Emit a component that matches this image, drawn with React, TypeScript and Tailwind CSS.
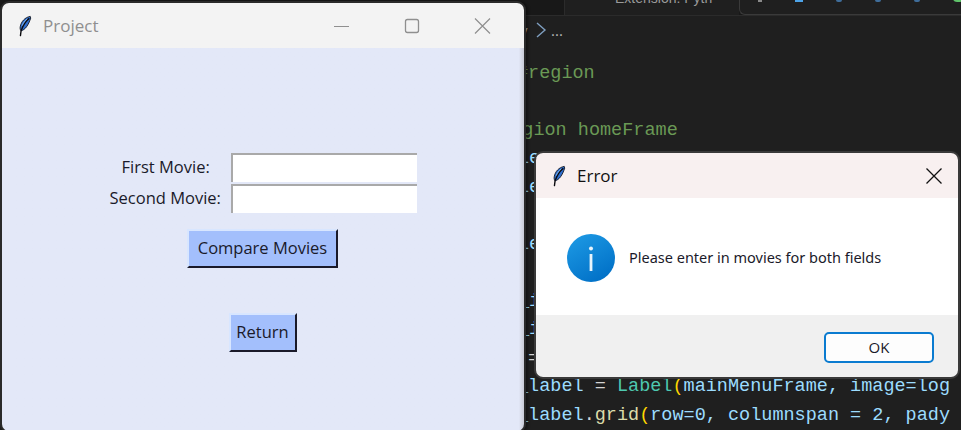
function Feather({ className }: { className?: string }) {
  return (
    <svg className={className} viewBox="0 0 16 24" fill="none">
      <path d="M14 1C8 2 3.500 7 2.500 13C2.200 15 2.600 16.500 3.500 17.500C8 16.500 12 11 14.500 3Z" fill="#2f6fd0" stroke="#10151f" strokeWidth="1" />
      <path d="M12.500 3.500C9 6 6 10.500 3.500 17.500L2.800 23" stroke="#0b0b0f" strokeWidth="1.600" strokeLinecap="round" />
      <path d="M10.500 4C8 6 6 8.500 4.800 11.500" stroke="#8fc0f5" strokeWidth="1" />
    </svg>
  );
}

const codeLines: { text: React.ReactNode; pad: string }[] = [
  { pad: "pl-[517px]", text: <span className="text-[#6a9955]">#region</span> },
  { pad: "", text: "" },
  { pad: "pl-[489px]", text: <span className="text-[#6a9955]">#region homeFrame</span> },
  { pad: "pl-[518px]", text: <span className="text-[#9cdcfe]">le</span> },
  { pad: "pl-[518px]", text: <span className="text-[#9cdcfe]">le</span> },
  { pad: "", text: "" },
  { pad: "pl-[518px]", text: <span className="text-[#9cdcfe]">le</span> },
  { pad: "", text: "" },
  { pad: "pl-[518px]", text: <span className="text-[#9cdcfe]">_i</span> },
  { pad: "pl-[518px]", text: <span className="text-[#9cdcfe]">_i</span> },
  {
    pad: "pl-[528px]",
    text: (
      <>
        <span className="text-[#d4d4d4]">= </span>
        <span className="text-[#4ec9b0]">ImageTk.PhotoImage</span>
        <span className="text-[#ffd700]">(</span>
        <span className="text-[#9cdcfe]">logo_image</span>
        <span className="text-[#ffd700]">)</span>
      </>
    ),
  },
  {
    pad: "pl-[517px]",
    text: (
      <>
        <span className="text-[#9cdcfe]">_label</span>
        <span className="text-[#d4d4d4]"> = </span>
        <span className="text-[#4ec9b0]">Label</span>
        <span className="text-[#ffd700]">(</span>
        <span className="text-[#9cdcfe]">mainMenuFrame, image=log</span>
      </>
    ),
  },
  {
    pad: "pl-[517px]",
    text: (
      <>
        <span className="text-[#9cdcfe]">_label</span>
        <span className="text-[#d4d4d4]">.</span>
        <span className="text-[#dcdcaa]">grid</span>
        <span className="text-[#ffd700]">(</span>
        <span className="text-[#9cdcfe]">row=0, columnspan = 2, pady</span>
      </>
    ),
  },
];

function EditorBackground() {
  return (
    <div className="h-full flex flex-col bg-[#1f1f1f] font-['Liberation_Mono',monospace]">
      <div className="h-[20px] flex bg-[#181818] border-b border-[#2b2b2b] overflow-hidden">
        <div className="w-[565px] shrink-0 border-r border-[#2b2b2b]" />
        <div className="w-[174px] shrink-0 bg-[#1f1f1f] pl-[50px] -mt-[12px] text-[14px] text-[#9a9a9a] font-['Liberation_Sans',sans-serif] whitespace-nowrap overflow-hidden">
          Extension: Pyth
        </div>
        <div className="flex-1 bg-[#1f1f1f] border-l border-b border-[#3a3a3a] rounded-bl-md flex gap-[33px] pl-[18px] -mt-[2px]">
          <span className="w-[4px] h-[4px] bg-[#8a8a8a]" />
          <span className="w-[8px] h-[4px] bg-[#4da3e8]" />
          <span className="w-[6px] h-[4px] rounded-full bg-[#3f6d9a]" />
          <span className="w-[6px] h-[4px] rounded-full bg-[#3f6d9a]" />
          <span className="w-[6px] h-[4px] rounded-full bg-[#3f6d9a]" />
          <span className="w-[10px] h-[4px] rounded-b-full bg-[#5fc36a]" />
        </div>
      </div>
      <div className="h-[34px] flex items-center pl-[520px] text-[#b8b8b8] font-['Open_Sans',sans-serif] text-[15px] gap-[1px]">
        <span className="w-[12px] overflow-hidden">y</span>
        <svg className="w-[12px] h-[18px] ml-[2px]" viewBox="0 0 12 18" fill="none">
          <path d="M2 2L10 9L2 16" stroke="#7f9fc0" strokeWidth="1.400" />
        </svg>
        <span className="ml-[3px]">...</span>
      </div>
      <div className="h-[20px]" />
      {codeLines.map((line, i) => (
        <div key={i} className={`h-[28.500px] shrink-0 leading-[28.500px] text-[18.500px] whitespace-pre ${line.pad}`}>
          {line.text}
        </div>
      ))}
    </div>
  );
}

function MovieWindow() {
  return (
    <div className="absolute left-0 top-[1px] w-[526px] h-[432px] rounded-[9px] border-2 border-[#2a2a2a] overflow-hidden flex flex-col shadow-[2px_0_3px_rgba(0,0,0,0.4)]">
      <div className="h-[45px] shrink-0 bg-[#f3f3f3] flex items-center font-['Open_Sans',sans-serif]">
        <Feather className="w-[14px] h-[24px] ml-[16px]" />
        <span className="ml-[11px] text-[17px] text-[#8f8f8f]">Project</span>
        <div className="ml-auto flex items-center">
          <svg className="w-[70px] h-[20px]" viewBox="0 0 70 20" fill="none">
            <path d="M20 10.500H35" stroke="#8f8f8f" strokeWidth="1" />
          </svg>
          <svg className="w-[70px] h-[20px]" viewBox="0 0 70 20" fill="none">
            <rect x="21.500" y="3.500" width="13" height="13" rx="2" stroke="#8f8f8f" strokeWidth="1.300" />
          </svg>
          <svg className="w-[70px] h-[20px]" viewBox="0 0 70 20" fill="none">
            <path d="M21 2.500L36 17.500M36 2.500L21 17.500" stroke="#8f8f8f" strokeWidth="1.200" />
          </svg>
        </div>
      </div>
      <div className="flex-1 bg-gradient-to-r from-[#e3e8f8] from-[99%] to-[#c9cbd6] flex flex-col items-center text-[#1a1a2a] font-['Open_Sans',sans-serif] text-[16.500px]">
        <div className="mt-[105px] ml-[-1px] grid grid-cols-[122px_186px] gap-y-[2px]">
          <div className="h-[29px] flex items-center pl-[13px]">First Movie:</div>
          <div className="h-[29px] bg-white border-t-2 border-l-2 border-[#a9a9a9]" />
          <div className="h-[29px] flex items-center pl-[1px]">Second Movie:</div>
          <div className="h-[29px] bg-white border-t-2 border-l-2 border-[#a9a9a9]" />
        </div>
        <button className="mt-[16px] ml-[-1px] h-[39px] w-[151px] bg-[#a3bffc] border-2 border-t-[#d8e6ff] border-l-[#d8e6ff] border-r-[#1a1a2a] border-b-[#1a1a2a]">
          Compare Movies
        </button>
        <button className="mt-[45px] ml-[-1px] h-[39px] w-[68px] bg-[#a3bffc] border-2 border-t-[#d8e6ff] border-l-[#d8e6ff] border-r-[#1a1a2a] border-b-[#1a1a2a]">
          Return
        </button>
      </div>
    </div>
  );
}

function ErrorDialog() {
  return (
    <div className="absolute left-[534px] top-[151px] w-[426px] h-[228px] rounded-[9px] border-2 border-[#3a3a3a] overflow-hidden flex flex-col font-['Open_Sans',sans-serif]">
      <div className="h-[45px] shrink-0 bg-[#f8f0f0] flex items-center">
        <Feather className="w-[14px] h-[24px] ml-[16px]" />
        <span className="ml-[11px] text-[17px] text-[#111]">Error</span>
        <svg className="ml-auto mr-[16px] w-[16px] h-[16px]" viewBox="0 0 16 16" fill="none">
          <path d="M0.500 0.500L15.500 15.500M15.500 0.500L0.500 15.500" stroke="#111" strokeWidth="1.300" />
        </svg>
      </div>
      <div className="h-[117px] shrink-0 bg-white flex items-center pl-[31px] pt-[3px]">
        <svg className="w-[48px] h-[48px]" viewBox="0 0 48 48">
          <defs>
            <linearGradient id="info" x1="0" y1="0" x2="0.600" y2="1">
              <stop offset="0" stopColor="#1f9ce6" />
              <stop offset="1" stopColor="#0272c8" />
            </linearGradient>
          </defs>
          <circle cx="24" cy="24" r="24" fill="url(#info)" />
          <circle cx="24" cy="14.500" r="2" fill="#e8f4fc" />
          <rect x="22.600" y="20" width="2.800" height="17" fill="#e8f4fc" />
        </svg>
        <span className="ml-[14px] text-[14.500px] text-[#1a1a2a] font-['Noto_Sans',sans-serif]">Please enter in movies for both fields</span>
      </div>
      <div className="flex-1 bg-[#f0f0f0] flex items-start justify-end pt-[17px] pr-[24px]">
        <button className="w-[110px] h-[31px] bg-[#fdfdfd] border-2 border-[#0a7bd0] rounded-[5px] text-[15px] text-[#1a1a2a]">OK</button>
      </div>
    </div>
  );
}

export default function App() {
  return (
    <div className="relative w-[961px] h-[430px] overflow-hidden">
      <EditorBackground />
      <MovieWindow />
      <ErrorDialog />
    </div>
  );
}
